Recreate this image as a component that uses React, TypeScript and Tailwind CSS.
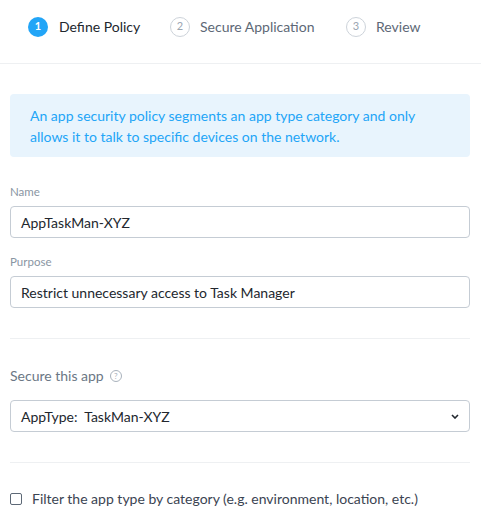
import React from "react";

const font = { fontFamily: "Lato, 'Open Sans', sans-serif" };

function Step({ n, label, active }: { n: number; label: string; active?: boolean }) {
  return (
    <div className="flex items-center">
      <div
        className={
          active
            ? "flex h-5 w-5 items-center justify-center rounded-full bg-[#22a5f7] text-[11px] font-bold text-white"
            : "flex h-5 w-5 items-center justify-center rounded-full border border-[#cdd3da] text-[11px] text-[#9aa5b1]"
        }
      >
        {n}
      </div>
      <span className={active ? "ml-[11px] text-[14px] text-[#22272e]" : "ml-[10px] text-[14px] text-[#5d6876]"}>
        {label}
      </span>
    </div>
  );
}

function Field({ label, value }: { label: string; value: string }) {
  return (
    <div className="flex flex-col">
      <label className="text-[11.5px] leading-[14px] text-[#8a96a3]">{label}</label>
      <div className="mt-[7px] flex h-8 items-center rounded-[4px] border border-[#c5ccd4] px-[10px] text-[14px] text-[#22272e]">
        {value}
      </div>
    </div>
  );
}

export default function App() {
  return (
    <div className="h-[527px] w-[481px] bg-white" style={font}>
      <div className="flex h-[64px] items-center border-b border-[#eef0f2] pb-[10px] pl-[28px]">
        <div className="w-[142px]">
          <Step n={1} label="Define Policy" active />
        </div>
        <div className="w-[176px]">
          <Step n={2} label="Secure Application" />
        </div>
        <Step n={3} label="Review" />
      </div>

      <div className="pl-[10px] pr-[11px]">
        <div className="mt-[30px] rounded-[4px] bg-[#e8f4fd] pb-[10px] pl-[20px] pr-[16px] pt-[11px] text-[14px] leading-[21px] text-[#22a5f7]">
          An app security policy segments an app type category and only allows it to talk to specific devices on the network.
        </div>

        <div className="mt-[28px]">
          <Field label="Name" value="AppTaskMan-XYZ" />
        </div>
        <div className="mt-[17px]">
          <Field label="Purpose" value="Restrict unnecessary access to Task Manager" />
        </div>

        <div className="mt-[30px] border-t border-[#eef0f2]" />

        <div className="mt-[28px] flex items-center text-[14px] leading-[18px] text-[#6b7785]">
          Secure this app
          <span className="ml-[6px] flex h-[12px] w-[12px] items-center justify-center rounded-full border border-[#a9b2bc] text-[8px] leading-none text-[#a9b2bc]">
            ?
          </span>
        </div>

        <div className="mt-[15px] flex h-8 items-center justify-between rounded-[4px] border border-[#c5ccd4] pl-[10px] pr-[10px] text-[14px] text-[#22272e]">
          <span>AppType:&nbsp; TaskMan-XYZ</span>
          <svg width="8" height="5" viewBox="0 0 8 5">
            <path d="M1 1 L4 4 L7 1" fill="none" stroke="#22272e" strokeWidth="1.6" />
          </svg>
        </div>

        <div className="mt-[30px] border-t border-[#eef0f2]" />

        <label className="mt-[25px] flex items-center text-[14px] text-[#3b4452]">
          <span className="h-[12px] w-[12px] rounded-[2px] border border-[#5d6876] bg-white" />
          <span className="ml-[10px]">Filter the app type by category (e.g. environment, location, etc.)</span>
        </label>
      </div>
    </div>
  );
}
